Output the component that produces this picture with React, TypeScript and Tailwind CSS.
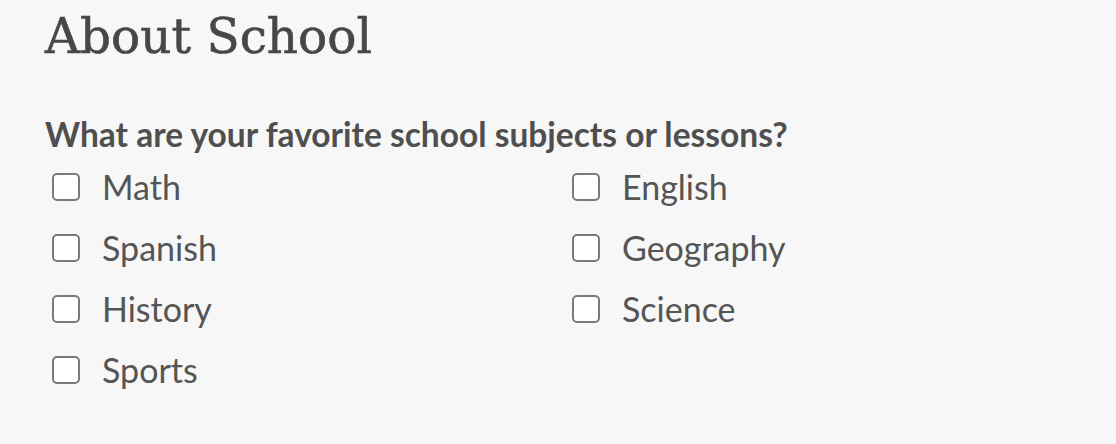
import React from "react";

const items = ["Math", "English", "Spanish", "Geography", "History", "Science", "Sports"];

export default function App() {
  return (
    <div className="w-[1116px] h-[444px] bg-[#f7f7f7] text-[#4d4d4d] pl-[45px] pt-[6px]">
      <h1 className="text-[48.5px] leading-[60px] font-normal text-[#474747]" style={{ fontFamily: '"DejaVu Serif", serif', WebkitTextStroke: "0.6px #474747" }}>
        About School
      </h1>
      <div className="mt-[48px]" style={{ fontFamily: 'Lato, "Noto Sans", sans-serif' }}>
        <div className="text-[33.5px] leading-[40px] font-bold text-[#4f4f4f]">
          What are your favorite school subjects or lessons?
        </div>
        <div className="grid grid-cols-[520px_520px] pl-[7px] mt-[2px]">
          {items.map((it) => (
            <label key={it} className="flex items-center h-[61px]">
              <span className="w-[28px] h-[28px] rounded-[5px] border-2 border-[#7a7a7a] bg-white shrink-0" />
              <span className="ml-[22px] text-[34px] leading-[40px] text-[#555]">{it}</span>
            </label>
          ))}
        </div>
      </div>
    </div>
  );
}
